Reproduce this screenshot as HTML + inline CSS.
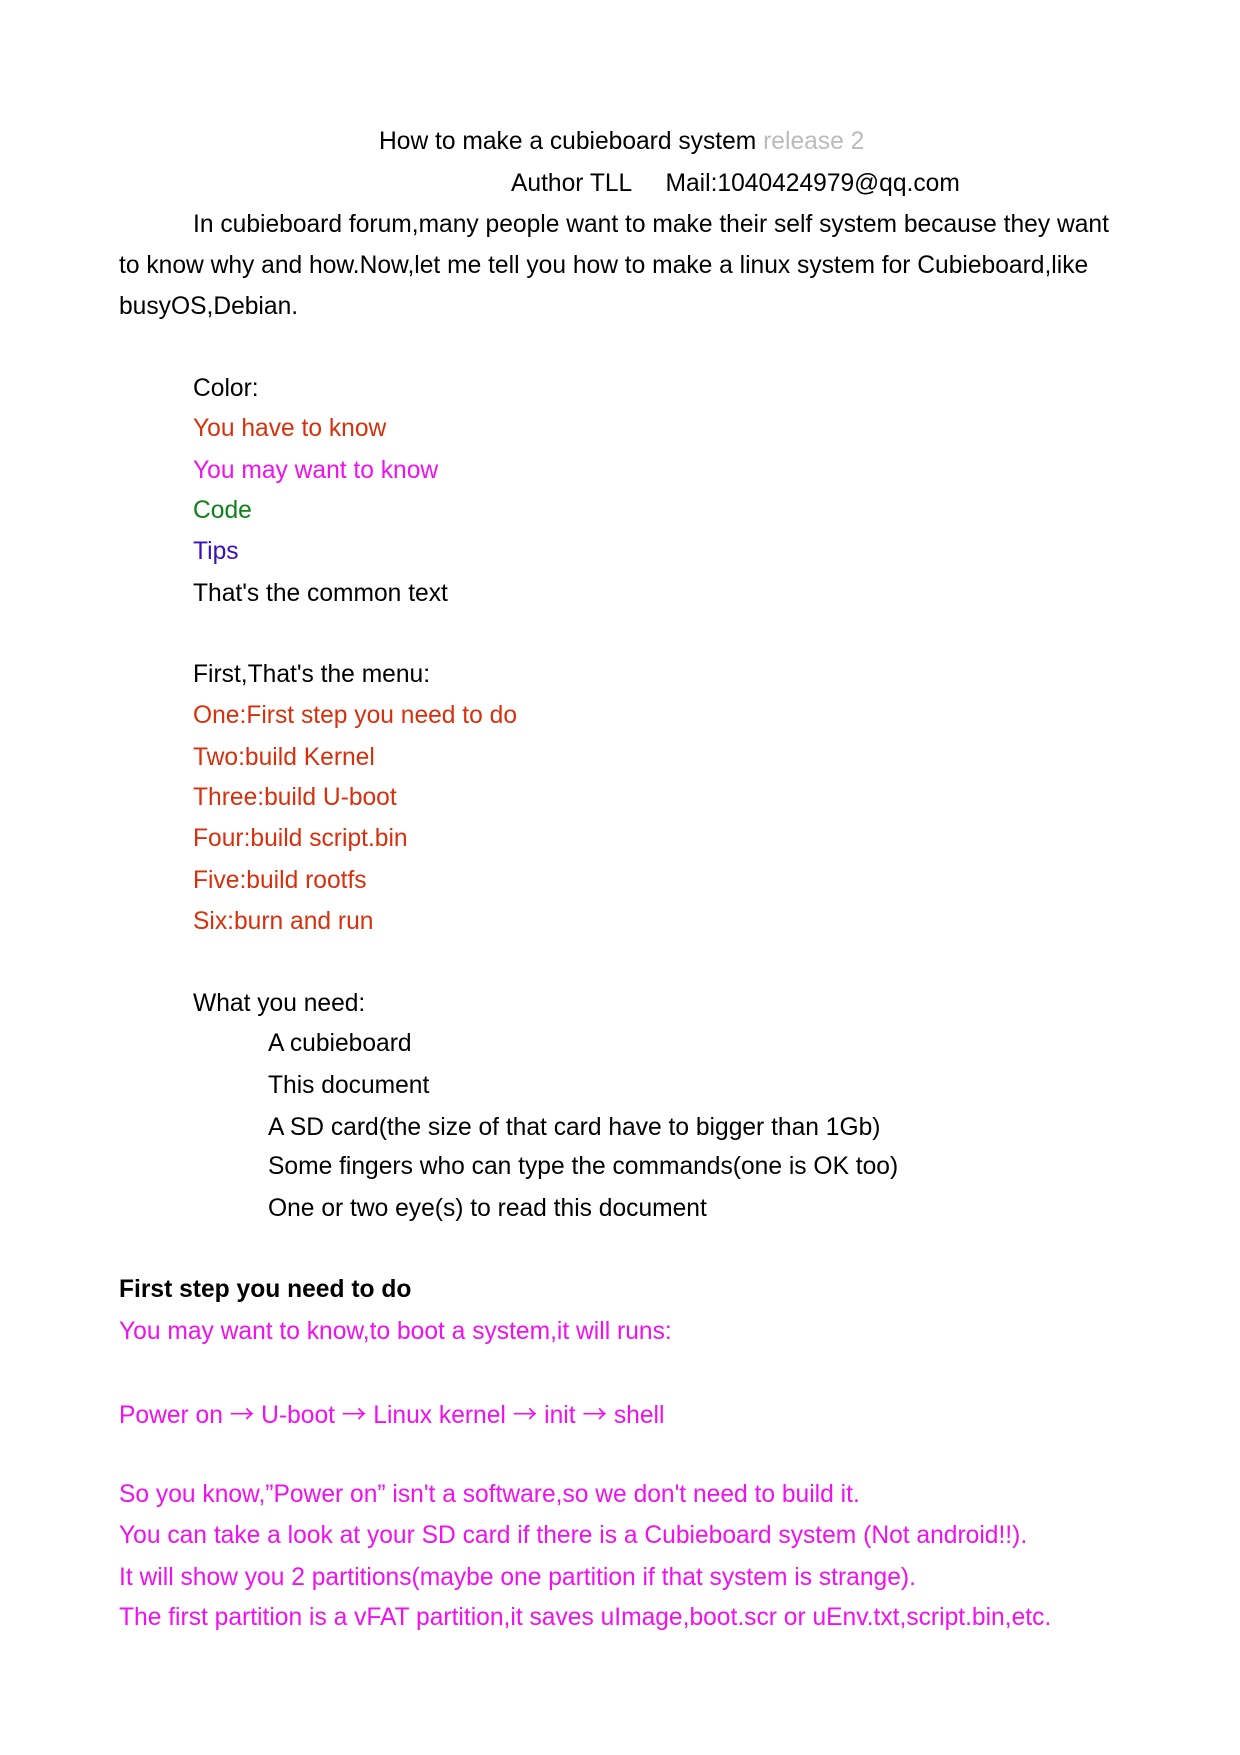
<!DOCTYPE html>
<html><head><meta charset="utf-8"><style>
body{margin:0;width:1240px;height:1755px;background:#fff;position:relative;overflow:hidden;font-family:"Liberation Sans","Noto Sans CJK SC",sans-serif;font-size:24.6px;color:#000}
.l{position:absolute;white-space:pre;line-height:40px;height:40px}
.r{color:#d8300c}.m{color:#f010f0}.g{color:#108018}.b{color:#3810c0}.gr{color:#bbb}
.a{font-family:"Noto Sans CJK SC",sans-serif}
</style></head><body>
<div class="l" style="left:379px;top:122px">How to make a cubieboard system <span class="gr">release 2</span></div>
<div class="l" style="left:511px;top:164px">Author TLL     Mail:1040424979@qq.com</div>
<div class="l" style="left:193px;top:205px">In cubieboard forum,many people want to make their self system because they want</div>
<div class="l" style="left:119px;top:246px">to know why and how.Now,let me tell you how to make a linux system for Cubieboard,like</div>
<div class="l" style="left:119px;top:287px">busyOS,Debian.</div>
<div class="l" style="left:193px;top:369px">Color:</div>
<div class="l r" style="left:193px;top:409px">You have to know</div>
<div class="l m" style="left:193px;top:451px">You may want to know</div>
<div class="l g" style="left:193px;top:491px">Code</div>
<div class="l b" style="left:193px;top:532px">Tips</div>
<div class="l" style="left:193px;top:574px">That's the common text</div>
<div class="l" style="left:193px;top:655px">First,That's the menu:</div>
<div class="l r" style="left:193px;top:696px">One:First step you need to do</div>
<div class="l r" style="left:193px;top:738px">Two:build Kernel</div>
<div class="l r" style="left:193px;top:778px">Three:build U-boot</div>
<div class="l r" style="left:193px;top:819px">Four:build script.bin</div>
<div class="l r" style="left:193px;top:861px">Five:build rootfs</div>
<div class="l r" style="left:193px;top:902px">Six:burn and run</div>
<div class="l" style="left:193px;top:984px">What you need:</div>
<div class="l" style="left:268px;top:1024px">A cubieboard</div>
<div class="l" style="left:268px;top:1066px">This document</div>
<div class="l" style="left:268px;top:1108px">A SD card(the size of that card have to bigger than 1Gb)</div>
<div class="l" style="left:268px;top:1147px">Some fingers who can type the commands(one is OK too)</div>
<div class="l" style="left:268px;top:1189px">One or two eye(s) to read this document</div>
<div class="l" style="left:119px;top:1270px;font-weight:bold">First step you need to do</div>
<div class="l m" style="left:119px;top:1312px">You may want to know,to boot a system,it will runs:</div>
<div class="l m" style="left:119px;top:1393px">Power on <span class="a">→</span> U-boot <span class="a">→</span> Linux kernel <span class="a">→</span> init <span class="a">→</span> shell</div>
<div class="l m" style="left:119px;top:1475px">So you know,”Power on” isn't a software,so we don't need to build it.</div>
<div class="l m" style="left:119px;top:1516px">You can take a look at your SD card if there is a Cubieboard system (Not android!!).</div>
<div class="l m" style="left:119px;top:1558px">It will show you 2 partitions(maybe one partition if that system is strange).</div>
<div class="l m" style="left:119px;top:1598px">The first partition is a vFAT partition,it saves uImage,boot.scr or uEnv.txt,script.bin,etc.</div>
</body></html>
